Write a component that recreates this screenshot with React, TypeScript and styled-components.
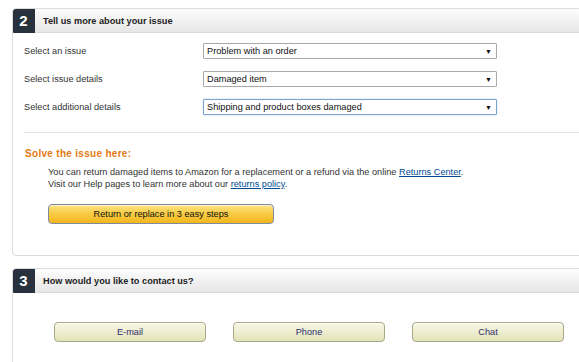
import React from "react";
import styled, { createGlobalStyle } from "styled-components";

const Global = createGlobalStyle`
  html, body { margin: 0; padding: 0; background: #fff; overflow: hidden; }
  body { font-family: "Liberation Sans", Arial, sans-serif; color: #333; }
`;

const Page = styled.div`
  width: 579px;
  height: 362px;
  overflow: hidden;
  padding: 8px 0 0 12px;
  box-sizing: border-box;
`;

const Section = styled.section<{ $h: number }>`
  width: 620px;
  height: ${(p) => p.$h}px;
  border: 1px solid #dcdcdc;
  border-radius: 4px;
  box-sizing: border-box;
  margin-bottom: 12px;
  overflow: hidden;
`;

const Header = styled.div`
  display: flex;
  align-items: stretch;
  height: 23px;
  background: linear-gradient(#fdfdfd, #e6e6e6);
  border-bottom: 1px solid #dadada;
`;

const Badge = styled.div`
  width: 23px;
  background: #27323c;
  color: #fff;
  font-weight: bold;
  font-size: 15px;
  display: flex;
  align-items: center;
  justify-content: center;
  margin: -1px 0 -1px -1px;
  border-radius: 3px 0 0 3px;
`;

const Title = styled.div`
  display: flex;
  align-items: center;
  padding-left: 8px;
  font-size: 9.2px;
  font-weight: bold;
  color: #222;
`;

const Form = styled.div`
  display: flex;
  flex-direction: column;
  gap: 12px;
  padding: 10px 0 0 11px;
`;

const Row = styled.div`
  display: flex;
  align-items: center;
  height: 16px;
`;

const Label = styled.div`
  width: 179px;
  font-size: 9.2px;
  color: #333;
`;

const Select = styled.div<{ $focus?: boolean }>`
  width: 294px;
  height: 16px;
  box-sizing: border-box;
  border: 1px solid ${(p) => (p.$focus ? "#7da2ce" : "#a9a9a9")};
  box-shadow: ${(p) => (p.$focus ? "0 0 2px #b4cfee" : "none")};
  border-radius: 1px;
  display: flex;
  align-items: center;
  justify-content: space-between;
  padding: 0 4px 0 3px;
  font-size: 9.2px;
  color: #111;
`;

const Arrow = styled.span`
  font-size: 7px;
  color: #111;
`;

const Divider = styled.div`
  height: 1px;
  background: #e2e2e2;
  margin: 17px 0 0 11px;
`;

const SolveTitle = styled.div`
  margin: 15px 0 0 12px;
  font-size: 10px;
  font-weight: bold;
  color: #e47911;
  letter-spacing: 0.3px;
`;

const Para = styled.p`
  margin: 7px 0 0 35px;
  font-size: 9.2px;
  line-height: 12px;
  color: #333;
`;

const Link = styled.a`
  color: #004b91;
  text-decoration: underline;
`;

const YellowButton = styled.div`
  margin: 14px 0 0 35px;
  width: 226px;
  height: 20px;
  box-sizing: border-box;
  border: 1px solid #7f8aa0;
  border-radius: 4px;
  background: linear-gradient(#fde48a 0%, #f8cf4c 40%, #f3b61c 100%);
  box-shadow: inset 0 1px 0 #fff3c4;
  display: flex;
  align-items: center;
  justify-content: center;
  font-size: 9.2px;
  color: #111;
`;

const ContactRow = styled.div`
  display: flex;
  gap: 27px;
  padding: 29px 0 0 41px;
`;

const ContactButton = styled.div`
  width: 152px;
  height: 20px;
  box-sizing: border-box;
  border: 1px solid #a9a98a;
  border-radius: 4px;
  background: linear-gradient(#f7f7e4 0%, #eeeed0 50%, #e2e2b8 100%);
  box-shadow: inset 0 1px 0 #fdfdf4;
  display: flex;
  align-items: center;
  justify-content: center;
  font-size: 9.2px;
  color: #2e2e6e;
`;

export default function App() {
  return (
    <>
      <Global />
      <Page>
        <Section $h={248}>
          <Header>
            <Badge>2</Badge>
            <Title>Tell us more about your issue</Title>
          </Header>
          <Form>
            <Row>
              <Label>Select an issue</Label>
              <Select>
                Problem with an order<Arrow>▼</Arrow>
              </Select>
            </Row>
            <Row>
              <Label>Select issue details</Label>
              <Select>
                Damaged item<Arrow>▼</Arrow>
              </Select>
            </Row>
            <Row>
              <Label>Select additional details</Label>
              <Select $focus>
                Shipping and product boxes damaged<Arrow>▼</Arrow>
              </Select>
            </Row>
          </Form>
          <Divider />
          <SolveTitle>Solve the issue here:</SolveTitle>
          <Para>
            You can return damaged items to Amazon for a replacement or a refund via the online{" "}
            <Link>Returns Center</Link>.
            <br />
            Visit our Help pages to learn more about our <Link>returns policy</Link>.
          </Para>
          <YellowButton>Return or replace in 3 easy steps</YellowButton>
        </Section>
        <Section $h={120}>
          <Header>
            <Badge>3</Badge>
            <Title>How would you like to contact us?</Title>
          </Header>
          <ContactRow>
            <ContactButton>E-mail</ContactButton>
            <ContactButton>Phone</ContactButton>
            <ContactButton>Chat</ContactButton>
          </ContactRow>
        </Section>
      </Page>
    </>
  );
}
